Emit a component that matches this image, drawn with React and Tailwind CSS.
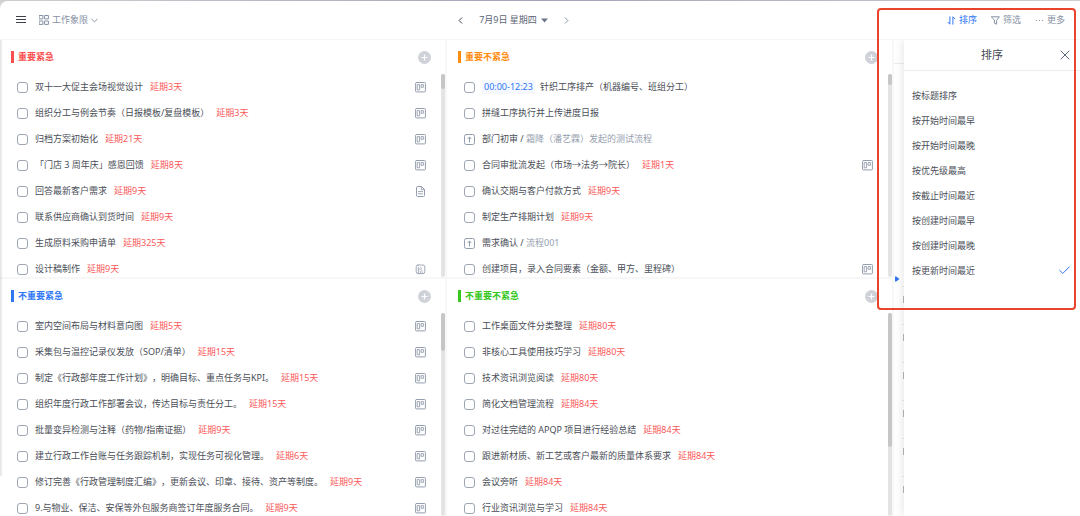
import React, { useState } from "react";

const quadrants = [
  {
    id: "q1",
    title: "重要紧急",
    text: "text-[#fa4f4f]",
    bar: "bg-[#fa4f4f]",
    thumb: "h-[15px]",
    tasks: [
      { name: "双十一大促主会场视觉设计", delay: "延期3天", icon: "board" },
      { name: "组织分工与例会节奏（日报模板/复盘模板）", delay: "延期3天", icon: "board" },
      { name: "归档方案初始化", delay: "延期21天", icon: "board" },
      { name: "「门店 3 周年庆」感恩回馈", delay: "延期8天", icon: "board" },
      { name: "回答最新客户需求", delay: "延期9天", icon: "doc" },
      { name: "联系供应商确认到货时间", delay: "延期9天" },
      { name: "生成原料采购申请单", delay: "延期325天" },
      { name: "设计稿制作", delay: "延期9天", icon: "image" },
    ],
  },
  {
    id: "q2",
    title: "重要不紧急",
    text: "text-[#ff8c0f]",
    bar: "bg-[#ff8c0f]",
    thumb: "h-[11px]",
    tasks: [
      { name: "针织工序排产（机器编号、班组分工）", time: "00:00-12:23" },
      { name: "拼缝工序执行并上传进度日报" },
      { name: "部门初审", flow: "霜降（潘艺霖）发起的测试流程" },
      { name: "合同审批流发起（市场→法务→院长）", delay: "延期1天", icon: "board" },
      { name: "确认交期与客户付款方式", delay: "延期9天" },
      { name: "制定生产排期计划", delay: "延期9天" },
      { name: "需求确认", flow: "流程001" },
      { name: "创建项目，录入合同要素（金额、甲方、里程碑）", icon: "board" },
    ],
  },
  {
    id: "q3",
    title: "不重要紧急",
    text: "text-[#2f77f6]",
    bar: "bg-[#2f77f6]",
    thumb: "h-[38px]",
    tasks: [
      { name: "室内空间布局与材料意向图", delay: "延期5天", icon: "board" },
      { name: "采集包与温控记录仪发放（SOP/清单）", delay: "延期15天", icon: "board" },
      { name: "制定《行政部年度工作计划》，明确目标、重点任务与KPI。", delay: "延期15天", icon: "board" },
      { name: "组织年度行政工作部署会议，传达目标与责任分工。", delay: "延期15天", icon: "board" },
      { name: "批量变异检测与注释（药物/指南证据）", delay: "延期9天", icon: "board" },
      { name: "建立行政工作台账与任务跟踪机制，实现任务可视化管理。", delay: "延期6天", icon: "board" },
      { name: "修订完善《行政管理制度汇编》，更新会议、印章、接待、资产等制度。", delay: "延期9天", icon: "board" },
      { name: "9.与物业、保洁、安保等外包服务商签订年度服务合同。", delay: "延期9天", icon: "board" },
    ],
  },
  {
    id: "q4",
    title: "不重要不紧急",
    text: "text-[#35c71b]",
    bar: "bg-[#35c71b]",
    thumb: "h-[134px]",
    tasks: [
      { name: "工作桌面文件分类整理", delay: "延期80天" },
      { name: "非核心工具使用技巧学习", delay: "延期80天" },
      { name: "技术资讯浏览阅读", delay: "延期80天" },
      { name: "简化文档管理流程", delay: "延期84天" },
      { name: "对过往完结的 APQP 项目进行经验总结", delay: "延期84天" },
      { name: "跟进新材质、新工艺或客户最新的质量体系要求", delay: "延期84天" },
      { name: "会议旁听", delay: "延期84天" },
      { name: "行业资讯浏览与学习", delay: "延期84天" },
    ],
  },
];

const sortOptions = [
  "按标题排序",
  "按开始时间最早",
  "按开始时间最晚",
  "按优先级最高",
  "按截止时间最近",
  "按创建时间最早",
  "按创建时间最晚",
  "按更新时间最近",
];

const Icon = ({ size = "size-[11px]", box = 11, children }) => (
  <svg
    className={`${size} shrink-0`}
    viewBox={`0 0 ${box} ${box}`}
    fill="none"
    stroke="currentColor"
    strokeLinecap="round"
    strokeLinejoin="round"
    aria-hidden="true"
  >
    {children}
  </svg>
);

const TaskIcon = ({ type }) => {
  if (type === "board") {
    return (
      <Icon>
        <rect x="0.6" y="0.5" width="9.8" height="9.4" rx="0.8" />
        <rect x="2.6" y="2.6" width="2" height="5.2" strokeWidth="0.9" />
        <rect x="6.5" y="2.6" width="1.9" height="2.7" strokeWidth="0.9" />
      </Icon>
    );
  }
  if (type === "doc") {
    return (
      <Icon>
        <path d="M1.5 1.5a1 1 0 0 1 1-1h4l3 3v6a1 1 0 0 1-1 1h-6a1 1 0 0 1-1-1z" />
        <path d="M6.3 0.7v3h3M3.4 5.6h4.2M3.4 7.8h4.2" strokeWidth="0.9" />
      </Icon>
    );
  }
  return (
    <Icon>
      <rect x="1.2" y="1" width="8.6" height="8.6" rx="1.8" strokeWidth="0.9" />
      <path d="M3.4 9.4V3.2M3.4 5.2c2.4-0.8 4 0.8 4 4.2M5.2 7.2v2.2M5.4 3.2l1.6 1.6" strokeWidth="0.8" />
    </Icon>
  );
};

const Task = ({ task }) => (
  <li className="flex h-[26px] shrink-0 items-center pl-[17px] pr-[15px] text-[#959eae]">
    {task.flow ? (
      <div className="flex flex-1 items-center gap-[7px]">
        <Icon>
          <rect x="0.5" y="0.5" width="10" height="10" rx="1.8" />
          <path d="M5.5 8V3.2M3.8 4.8l1.7-1.8 1.7 1.8" />
        </Icon>
        <p>
          <span className="text-[#4a4e57]">{task.name} / </span>
          {task.flow}
        </p>
      </div>
    ) : (
      <label className="flex flex-1 items-center whitespace-nowrap text-[#4a4e57]">
        <input
          type="checkbox"
          className="mr-[7px] size-[11px] shrink-0 appearance-none rounded-[3px] border border-[#9ea6b4] bg-white checked:bg-blue-500"
        />
        {task.time && (
          <span className="mr-[5px] bg-[#f5f9ff] px-[2px] text-[#2f77f6]">{task.time}</span>
        )}
        <span>{task.name}</span>
        {task.delay && <span className="ml-[7px] text-[#fa5a5a]">{task.delay}</span>}
      </label>
    )}
    {task.icon && <TaskIcon type={task.icon} />}
  </li>
);

const Quadrant = ({ data }) => (
  <section className="flex min-h-0 min-w-0 flex-col overflow-hidden bg-white">
    <div className="flex h-[34px] shrink-0 items-center justify-between pl-[11px] pr-[14px]">
      <h2 className={`flex items-center gap-1 font-bold ${data.text}`}>
        <span className={`h-3 w-[3px] ${data.bar}`} />
        {data.title}
      </h2>
      <button type="button" aria-label="添加任务" className="text-white">
        <Icon size="size-[13px]" box={13}>
          <circle cx="6.5" cy="6.5" r="6.5" fill="#cfd2d8" stroke="none" />
          <path d="M6.5 4v5M4 6.5h5" strokeWidth="1.2" />
        </Icon>
      </button>
    </div>
    <div className="flex min-h-0 flex-1">
      <ul className="min-w-0 flex-1 overflow-hidden">
        {data.tasks.map((task) => (
          <Task key={task.name} task={task} />
        ))}
      </ul>
      <div className="w-1 rounded-full bg-[#e4e4e4]">
        <div className={`w-1 rounded-full bg-[#c6c6c6] ${data.thumb}`} />
      </div>
    </div>
  </section>
);

const Header = () => (
  <header className="flex h-[39px] shrink-0 items-center rounded-tl-lg border-b border-[#f4f4f5] bg-white pl-4 pr-[15px] text-[#8791a3]">
    <div className="flex flex-1 items-center gap-[13px]">
      <button type="button" aria-label="菜单" className="text-[#3b404b]">
        <Icon size="size-[10px]" box={10}>
          <path d="M0.5 1.5h9M0.5 4.5h9M0.5 7.5h9" strokeWidth="1.2" />
        </Icon>
      </button>
      <button type="button" className="flex items-center gap-[3px]">
        <Icon size="size-[10px]" box={10}>
          <rect x="0.5" y="0.5" width="3.4" height="3.4" />
          <rect x="6" y="0.5" width="3.4" height="3.4" />
          <rect x="0.5" y="6" width="3.4" height="3.4" />
          <rect x="6" y="6" width="3.4" height="3.4" />
        </Icon>
        工作象限
        <Icon size="size-[7px]" box={7}>
          <path d="M0.8 2.2l2.7 2.7 2.7-2.7" />
        </Icon>
      </button>
    </div>

    <div className="mr-[54px] flex items-center gap-[15px]">
      <button type="button" aria-label="前一天" className="text-[#3b404b]">
        <Icon size="size-[7px]" box={7}>
          <path d="M4.8 0.8L2.1 3.5l2.7 2.7" />
        </Icon>
      </button>
      <button type="button" className="flex items-center gap-1 text-[#5c6575]">
        7月9日 星期四
        <Icon size="size-[7px]" box={7}>
          <path d="M0 1.6h7L3.5 5.4z" fill="#6b7585" stroke="none" />
        </Icon>
      </button>
      <button type="button" aria-label="后一天">
        <Icon size="size-[7px]" box={7}>
          <path d="M2.2 0.8l2.7 2.7-2.7 2.7" />
        </Icon>
      </button>
    </div>

    <div className="flex flex-1 items-center justify-end gap-[14px]">
      <button type="button" className="flex items-center gap-[3px] text-[#2f77f6]">
        <Icon size="size-[9px]" box={9}>
          <path d="M2.9 0.8v7.4L1 6.3M5.9 8.2V0.8l1.9 1.9" />
        </Icon>
        排序
      </button>
      <button type="button" className="flex items-center gap-[3px]">
        <Icon size="size-[9px]" box={9}>
          <path d="M0.6 0.8h7.8L5.6 4.3v3.9l-2.2-1V4.3z" />
        </Icon>
        筛选
      </button>
      <button type="button" className="flex items-center gap-[3px]">
        <Icon size="size-[9px]" box={9}>
          <path d="M1.4 4.5h0.1M4.4 4.5h0.1M7.4 4.5h0.1" strokeWidth="1.2" />
        </Icon>
        更多
      </button>
    </div>
  </header>
);

const SortPanel = ({ selected, onSelect }) => (
  <div className="absolute inset-y-0 left-[10px] right-0 bg-white shadow-[-2px_0_8px_rgba(0,0,0,0.09)]">
    <div className="relative flex h-[31px] items-center justify-center border-b border-[#ececee]">
      <h2 className="text-[11px] text-[#434750]">排序</h2>
      <button type="button" aria-label="关闭" className="absolute right-[10px] text-[#5c6575]">
        <Icon size="size-[10px]" box={10}>
          <path d="M1 1l8 8M9 1l-8 8" />
        </Icon>
      </button>
    </div>
    <ul className="pt-3">
      {sortOptions.map((option) => (
        <li key={option}>
          <button
            type="button"
            onClick={() => onSelect(option)}
            className="flex h-[25px] w-full items-center justify-between pl-2 pr-[10px] text-[#4a4e57]"
          >
            {option}
            {option === selected && (
              <span className="text-[#2f77f6]">
                <Icon size="size-[11px]" box={11}>
                  <path d="M0.6 5.2l3.2 3.2 6.6-6.6" />
                </Icon>
              </span>
            )}
          </button>
        </li>
      ))}
    </ul>
  </div>
);

const App = () => {
  const [selected, setSelected] = useState("按更新时间最近");

  return (
    <div className="relative flex h-screen flex-col overflow-hidden bg-[#d4d4d6] font-['Noto_Sans','Noto_Sans_CJK_SC',sans-serif] text-[9px] leading-[14px] [text-spacing-trim:space-all]">
      <div className="h-px shrink-0 bg-linear-to-r from-[#cfcfd1] via-[#a3a3b8] to-[#cfcfd1]" />
      <Header />

      <main className="flex min-h-0 flex-1 gap-[2px] bg-[#f7f7f8]">
        <div className="grid min-w-0 flex-1 grid-cols-2 grid-rows-2 gap-[2px]">
          {quadrants.map((q) => (
            <Quadrant key={q.id} data={q} />
          ))}
        </div>

        <aside className="relative w-[186px] overflow-hidden bg-white">
          <div className="h-6 border-b border-[#ececee]" />
          <div className="flex h-[218px] items-end pl-px">
            <button type="button" aria-label="展开" className="text-[#2f77f6]">
              <Icon size="size-[6px]" box={6}>
                <path d="M0 0.5h1.2L4.5 3 1.2 5.5H0z" fill="currentColor" stroke="none" />
              </Icon>
            </button>
          </div>
          <ul className="pt-1">
            {["a", "b", "c", "d", "e", "f"].map((id) => (
              <li key={id} className="ml-2 flex h-[38px] border-t border-[#ececee] pl-px pt-[9px]">
                <input
                  type="checkbox"
                  aria-label="日程"
                  className="size-[7px] appearance-none border border-[#b8b8bc]"
                />
              </li>
            ))}
          </ul>
          <SortPanel selected={selected} onSelect={setSelected} />
        </aside>
      </main>

      {/* soft edge of the window on the left */}
      <div className="pointer-events-none absolute left-0 top-10 bottom-10 w-[3px] bg-linear-to-r from-black/12 to-transparent" />

      {/* highlight frame around the sort menu */}
      <div className="pointer-events-none absolute right-1 top-2 h-[302px] w-[199px] rounded-[4px] border-2 border-[#ea432c]" />
    </div>
  );
};

export default App;
